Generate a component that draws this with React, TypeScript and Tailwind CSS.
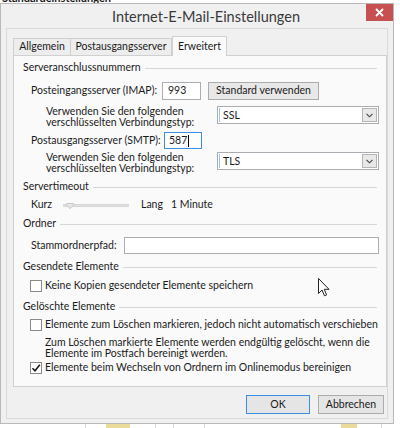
import React from "react";

const font = { fontFamily: "Lato, 'Noto Sans', sans-serif" };

function GroupHeader({ title, className = "" }: { title: string; className?: string }) {
  return (
    <div className={`flex items-center h-[14px] pr-[9px] ${className}`}>
      <span className="pl-[9px] pr-[4px] whitespace-nowrap">{title}</span>
      <div className="flex-1 h-px bg-[#d7d7d7]" />
    </div>
  );
}

function Checkbox({ checked = false }: { checked?: boolean }) {
  return (
    <span className="w-[12px] h-[12px] border border-[#8a8a8a] bg-white flex items-center justify-center shrink-0">
      {checked && (
        <svg width="10" height="10" viewBox="0 0 10 10">
          <path d="M1.5 5.2 L4 7.8 L8.8 1.8" fill="none" stroke="#1a1a1a" strokeWidth="1.6" />
        </svg>
      )}
    </span>
  );
}

function Select({ value }: { value: string }) {
  return (
    <div className="w-[162px] h-[18px] border border-[#abadb3] bg-white flex items-center">
      <span className="w-px h-[14px] bg-[#9cc3ea] ml-px" />
      <span className="flex-1 pl-[3px] leading-[11px]">{value}</span>
      <span className="w-[15px] h-[14px] mr-[1px] border border-[#b5b5b5] bg-[#e8e8e8] flex items-center justify-center">
        <svg width="7" height="5" viewBox="0 0 7 5">
          <path d="M0.5 0.8 L3.5 3.8 L6.5 0.8" fill="none" stroke="#444" strokeWidth="1.1" />
        </svg>
      </span>
    </div>
  );
}

export default function App() {
  return (
    <div className="w-[400px] h-[428px] bg-white overflow-hidden relative text-[10.5px] text-[#1a1a1a]" style={font}>
      {/* cut-off text above the dialog */}
      <div className="h-[3px] overflow-hidden flex items-end">
        <span className="pl-[2px] font-bold text-[11px] leading-[11px] whitespace-nowrap">Standardeinstellungen</span>
      </div>

      {/* Window */}
      <div className="w-[394px] h-[421px] bg-[#f0f0f0] border border-[#b9b9b9] flex flex-col">
        {/* Title bar */}
        <div className="h-[24px] relative flex items-center justify-center pl-[18px]">
          <span className="text-[14.5px] text-[#3a3a3a] leading-[15px] pt-[1px]">Internet-E-Mail-Einstellungen</span>
          <div className="absolute right-0 top-0 w-[27px] h-[17px] bg-[#c75050] flex items-center justify-center">
            <svg width="9" height="9" viewBox="0 0 9 9">
              <path d="M1 1 L8 8 M8 1 L1 8" stroke="white" strokeWidth="1.8" />
            </svg>
          </div>
        </div>

        {/* Client area */}
        <div className="flex-1 mx-[5px] mb-[4px] border border-[#dadada] bg-[#f0f0f0] pl-[6px] pr-[2px] flex flex-col">
          {/* Tabs */}
          <div className="flex items-end h-[26px]">
            <div className="w-[58px] h-[17px] border border-[#d0d0d0] border-b-0 bg-[#ededed] flex items-center justify-center">Allgemein</div>
            <div className="w-[101px] h-[17px] border border-[#d0d0d0] border-b-0 border-l-0 bg-[#ededed] flex items-center justify-center">Postausgangsserver</div>
            <div className="w-[55px] h-[20px] border border-[#d0d0d0] border-b-0 bg-[#fafafa] flex items-start justify-center pt-[2px] -mb-px relative z-10">Erweitert</div>
          </div>

          {/* Panel */}
          <div className="w-[374px] h-[332px] border border-[#d0d0d0] bg-[#fafafa] flex flex-col pt-[5px]">
            <GroupHeader title="Serveranschlussnummern" />

            <div className="mt-[7px] h-[18px] flex items-center pl-[17px]">
              <span className="w-[131px] whitespace-nowrap">Posteingangsserver (IMAP):</span>
              <div className="w-[39px] h-[18px] border border-[#abadb3] bg-white flex items-center pl-[5px]">993</div>
              <div className="ml-[7px] w-[111px] h-[18px] border border-[#acacac] bg-[#e8e8e8] flex items-center justify-center whitespace-nowrap">Standard verwenden</div>
            </div>

            <div className="mt-[6px] h-[22px] flex items-start">
              <div className="pl-[32px] w-[203px] leading-[11px] whitespace-nowrap">
                Verwenden Sie den folgenden
                <br />
                verschlüsselten Verbindungstyp:
              </div>
              <Select value="SSL" />
            </div>

            <div className="mt-[4px] h-[17px] flex items-center pl-[17px]">
              <span className="w-[133px] whitespace-nowrap">Postausgangsserver (SMTP):</span>
              <div className="w-[38px] h-[17px] border border-[#3c8fe0] bg-white flex items-center pl-[4px]">
                587<span className="w-px h-[12px] bg-black ml-px" />
              </div>
            </div>

            <div className="mt-[3px] h-[22px] flex items-start">
              <div className="pl-[32px] w-[203px] leading-[11px] whitespace-nowrap">
                Verwenden Sie den folgenden
                <br />
                verschlüsselten Verbindungstyp:
              </div>
              <Select value="TLS" />
            </div>

            <GroupHeader title="Servertimeout" className="mt-[6px]" />

            <div className="mt-[4px] h-[14px] flex items-center pl-[17px]">
              <span className="w-[32px]">Kurz</span>
              <div className="relative w-[66px] h-[3px] bg-[#e0e0e0] border-y border-[#d6d6d6]">
                <svg className="absolute left-[3px] -top-[2px]" width="8" height="6" viewBox="0 0 8 6">
                  <path d="M0.5 0.5 H7.5 V2.5 L4 5.5 L0.5 2.5 Z" fill="#e6e6e6" stroke="#c8c8c8" />
                </svg>
              </div>
              <span className="ml-[12px]">Lang</span>
              <span className="ml-[8px]">1 Minute</span>
            </div>

            <GroupHeader title="Ordner" className="mt-[5px]" />

            <div className="mt-[6px] h-[17px] flex items-center pl-[17px]">
              <span className="w-[93px] whitespace-nowrap">Stammordnerpfad:</span>
              <div className="w-[255px] h-[17px] border border-[#abadb3] bg-white" />
            </div>

            <GroupHeader title="Gesendete Elemente" className="mt-[6px]" />

            <div className="mt-[5px] h-[14px] flex items-center gap-[3px] pl-[16px]">
              <Checkbox />
              <span className="whitespace-nowrap">Keine Kopien gesendeter Elemente speichern</span>
            </div>

            <GroupHeader title="Gelöschte Elemente" className="mt-[7px]" />

            <div className="mt-[4px] h-[14px] flex items-center gap-[3px] pl-[16px]">
              <Checkbox />
              <span className="whitespace-nowrap">Elemente zum Löschen markieren, jedoch nicht automatisch verschieben</span>
            </div>

            <div className="mt-[5px] h-[22px] pl-[31px] leading-[11px] whitespace-nowrap">
              Zum Löschen markierte Elemente werden endgültig gelöscht, wenn die
              <br />
              Elemente im Postfach bereinigt werden.
            </div>

            <div className="mt-[2px] h-[14px] flex items-center gap-[3px] pl-[16px]">
              <Checkbox checked />
              <span className="whitespace-nowrap">Elemente beim Wechseln von Ordnern im Onlinemodus bereinigen</span>
            </div>
          </div>

          {/* Buttons */}
          <div className="flex justify-end gap-[8px] mt-[8px] pr-[1px]">
            <div className="w-[64px] h-[19px] border border-[#3c8fe0] bg-[#e5e5e5] flex items-center justify-center">OK</div>
            <div className="w-[66px] h-[19px] border border-[#acacac] bg-[#e5e5e5] flex items-center justify-center">Abbrechen</div>
          </div>
        </div>
      </div>

      {/* desktop strip below the dialog */}
      <div className="flex h-[6px] items-stretch">
        <span className="ml-[85px] w-px bg-[#d8d8d8]" />
        <span className="ml-[20px] w-[24px] bg-[#eadb9a]" />
        <span className="ml-[25px] w-px bg-[#d8d8d8]" />
        <span className="ml-[17px] w-px bg-[#d8d8d8]" />
        <span className="ml-[30px] w-px bg-[#d8d8d8]" />
        <span className="ml-[136px] w-[16px] bg-[#eadb9a]" />
        <span className="ml-[24px] w-px bg-[#d8d8d8]" />
      </div>

      {/* mouse cursor */}
      <svg className="absolute left-[318px] top-[278px]" width="13" height="19" viewBox="0 0 13 19">
        <path d="M0.5 0.5 V15.5 L4 12 L6.5 17.8 L8.6 16.9 L6.2 11.3 H11 Z" fill="white" stroke="#222" strokeWidth="1" />
      </svg>
    </div>
  );
}
